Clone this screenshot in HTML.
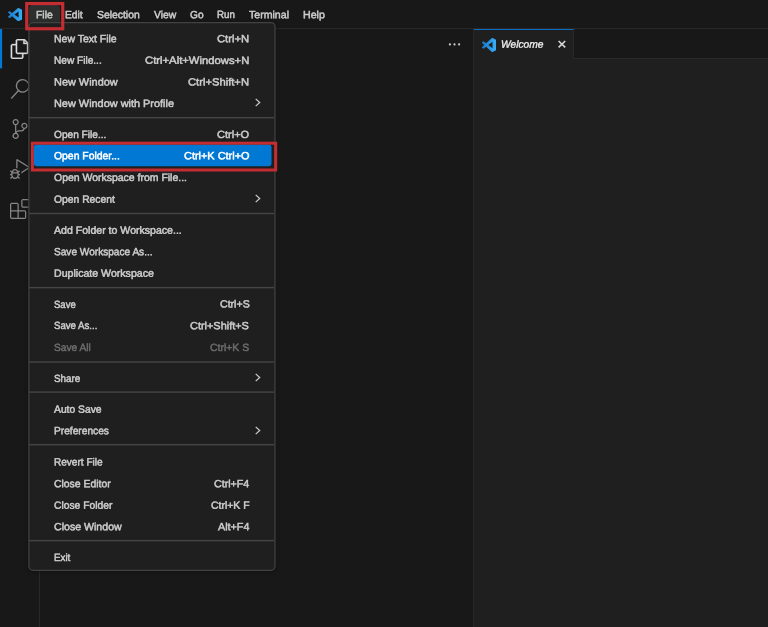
<!DOCTYPE html>
<html><head><meta charset="utf-8"><title>Welcome - Visual Studio Code</title>
<style>
html,body{margin:0;padding:0;}
body{width:768px;height:627px;overflow:hidden;background:#181818;font-family:"Liberation Sans",sans-serif;position:relative;color:#ccc;}
.abs{position:absolute;}
#titlebar{left:0;top:0;width:768px;height:28px;background:#181818;border-bottom:1px solid #282828;}
#activity{left:0;top:29px;width:39px;height:598px;background:#181818;border-right:1px solid #282828;}
#sidebar{left:40px;top:29px;width:433px;height:598px;background:#181818;border-right:1px solid #282828;}
#editor{left:474px;top:29px;width:294px;height:598px;background:#1f1f1f;}
#tabs{left:474px;top:29px;width:294px;height:29px;background:#181818;border-bottom:1px solid #292929;}
#tab{left:474px;top:29px;width:100px;height:30px;background:#1f1f1f;border-right:1px solid #292929;border-top:1px solid #0a6cc0;box-sizing:border-box;}
#filebtn{left:29px;top:5px;width:31px;height:19px;background:#2d2e2e;border-radius:4px;}
.t{position:absolute;-webkit-text-stroke:0.5px currentColor;font-size:10.5px;line-height:14px;color:#cccccc;white-space:nowrap;transform-origin:0 50%;}
.t.mb{color:#cccccc;}
.t.dis{color:#6b6b6b;}
.t.sel{color:#ffffff;}
.t.wel{color:#ececec;font-style:italic;-webkit-text-stroke:0.35px currentColor;}
#menushadow{left:29px;top:23px;width:246px;height:547px;border-radius:4px;box-shadow:0 1px 5px rgba(0,0,0,.45);}
.sep{position:absolute;left:29px;width:245px;height:1px;background:#454545;}
.chev{position:absolute;}
svg{display:block;}
#L{position:absolute;left:0;top:0;width:768px;height:627px;will-change:opacity;}
</style></head><body><div id="L">
<div id="titlebar" class="abs"></div>
<div id="activity" class="abs"></div>
<svg class="abs" style="left:0;top:29px" width="4" height="41" viewBox="0 0 4 41"><rect x="0" y="0" width="2.1" height="39.4" fill="#0078d4"/></svg>
<div id="sidebar" class="abs"></div>
<div id="editor" class="abs"></div>
<div id="tabs" class="abs"></div>
<div id="tab" class="abs"></div>

<!-- title bar logo -->
<svg class="abs" style="left:8px;top:7.7px" width="14.1" height="13.2" viewBox="0 0 24 24" preserveAspectRatio="none"><defs><linearGradient id="lg" x1="0" x2="1" y1="0" y2="0"><stop offset="0" stop-color="#1a78c8"/><stop offset="1" stop-color="#38aef8"/></linearGradient></defs><path fill="url(#lg)" d="M23.15 2.587L18.21.21a1.494 1.494 0 0 0-1.705.29l-9.46 8.63-4.12-3.128a.999.999 0 0 0-1.276.057L.327 7.261A1 1 0 0 0 .326 8.74L3.899 12 .326 15.26a1 1 0 0 0 .001 1.479L1.65 17.94a.999.999 0 0 0 1.276.057l4.12-3.128 9.46 8.63a1.492 1.492 0 0 0 1.704.29l4.942-2.377A1.5 1.5 0 0 0 24 20.06V3.939a1.5 1.5 0 0 0-.85-1.352zm-5.146 14.861L10.826 12l7.178-5.448v10.896z"/></svg>

<!-- activity icons -->
<svg class="abs" style="left:10.05px;top:39px" width="20" height="20" viewBox="0 0 24 24"><path fill="#dcdcdc" stroke="#dcdcdc" stroke-width="0.45" d="M17.5 0h-9L7 1.5V6H2.5L1 7.5v15.07L2.5 24h12.07L16 22.57V18h4.7l1.3-1.43V4.5L17.5 0zm0 2.12l2.38 2.38H17.5V2.12zm-3 20.38h-12v-15H7v9.07L8.500 18h6v4.5zm6-6h-12v-15H16V6h4.500v10.5z"/></svg>
<svg class="abs" style="left:10.2px;top:79px" width="20" height="20" viewBox="0 0 24 24"><path fill="#868686" d="M15.25 0a8.250 8.250 0 0 0-6.180 13.720L1 22.880l1.120 1.120 8.050-9.120A8.251 8.251 0 1 0 15.250.010V0zm0 15a6.750 6.750 0 1 1 0-13.500 6.750 6.750 0 0 1 0 13.500z"/></svg>
<svg class="abs" style="left:10.2px;top:119px" width="20" height="20" viewBox="0 0 24 24"><path fill="#868686" d="M21.007 8.222A3.738 3.738 0 0 0 15.045 5.200a3.737 3.737 0 0 0 1.156 6.583 2.988 2.988 0 0 1-2.668 1.670h-2.990a4.456 4.456 0 0 0-2.989 1.165V7.400a3.737 3.737 0 1 0-1.494 0v9.117a3.776 3.776 0 1 0 1.816.099 2.990 2.990 0 0 1 2.668-1.667h2.990a4.484 4.484 0 0 0 4.223-3.039 3.736 3.736 0 0 0 3.250-3.687zM4.565 3.738a2.242 2.242 0 1 1 4.484 0 2.242 2.242 0 0 1-4.484 0zm4.484 16.441a2.242 2.242 0 1 1-4.484 0 2.242 2.242 0 0 1 4.484 0zm8.221-9.715a2.242 2.242 0 1 1 0-4.485 2.242 2.242 0 0 1 0 4.485z"/></svg>
<svg class="abs" style="left:10.2px;top:159px" width="20" height="20" viewBox="0 0 24 24"><path fill="#868686" d="M10.940 13.500l-1.320 1.320a3.730 3.730 0 0 0-7.240 0L1.060 13.500 0 14.560l1.720 1.720-.220.220V18H0v1.500h1.500v.080c.077.489.214.966.410 1.420L0 22.940 1.060 24l1.650-1.650A4.308 4.308 0 0 0 6 24a4.310 4.310 0 0 0 3.290-1.650L10.940 24 12 22.940 10.090 21c.198-.464.336-.951.410-1.450v-.100H12V18h-1.500v-1.500l-.220-.220L12 14.560l-1.060-1.060zM6 13.500a2.250 2.250 0 0 1 2.250 2.250h-4.500A2.250 2.250 0 0 1 6 13.500zm3 6a3.330 3.330 0 0 1-3 3 3.330 3.330 0 0 1-3-3v-2.250h6v2.250zm14.760-9.900v1.260L13.500 17.370V15.600l8.500-5.370L9 2v9.460a5.070 5.070 0 0 0-1.500-.720V.630L8.640 0l15.120 9.600z"/></svg>
<svg class="abs" style="left:10.2px;top:199px" width="20" height="20" viewBox="0 0 24 24"><path fill="#868686" d="M13.500 1.500L15 0h7.500L24 1.500V9l-1.500 1.500H15L13.500 9V1.500zm1.500 0V9h7.500V1.500H15zM0 15V6l1.500-1.500H9L10.500 6v7.500H18l1.500 1.500v7.500L18 24H1.500L0 22.500V15zm9-1.500V6H1.500v7.500H9zM9 15H1.500v7.500H9V15zm1.500 7.500H18V15h-7.500v7.500z"/></svg>

<!-- sidebar "..." -->
<svg class="abs" style="left:446px;top:40px" width="18" height="9" viewBox="0 0 18 9"><circle cx="3.9" cy="4.45" r="1.1" fill="#cccccc"/><circle cx="8.5" cy="4.45" r="1.1" fill="#cccccc"/><circle cx="13.1" cy="4.45" r="1.1" fill="#cccccc"/></svg>

<!-- tab contents -->
<svg class="abs" style="left:481.8px;top:37.6px" width="14" height="14" viewBox="0 0 24 24"><path fill="url(#lg)" d="M23.15 2.587L18.21.21a1.494 1.494 0 0 0-1.705.29l-9.46 8.63-4.12-3.128a.999.999 0 0 0-1.276.057L.327 7.261A1 1 0 0 0 .326 8.74L3.899 12 .326 15.26a1 1 0 0 0 .001 1.479L1.65 17.94a.999.999 0 0 0 1.276.057l4.12-3.128 9.46 8.63a1.492 1.492 0 0 0 1.704.29l4.942-2.377A1.5 1.5 0 0 0 24 20.06V3.939a1.5 1.5 0 0 0-.85-1.352zm-5.146 14.861L10.826 12l7.178-5.448v10.896z"/></svg>
<svg class="abs" style="left:556px;top:38px" width="12" height="12" viewBox="0 0 12 12"><path d="M2.6 3 L9.2 9.3 M9.2 3 L2.6 9.3" stroke="#d6d6d6" stroke-width="1.6" fill="none"/></svg>

<!-- menubar -->
<div id="filebtn" class="abs"></div>
<div class="t mb" style="left:35.80px;top:7px;transform:translateY(0.20px) rotate(0.03deg) scaleX(0.9869);">File</div>
<div class="t mb" style="left:65.40px;top:7px;transform:translateY(0.20px) rotate(0.03deg) scaleX(0.9782);">Edit</div>
<div class="t mb" style="left:97.00px;top:7px;transform:translateY(0.20px) rotate(0.03deg) scaleX(0.9895);">Selection</div>
<div class="t mb" style="left:153.90px;top:7px;transform:translateY(0.20px) rotate(0.03deg) scaleX(0.9877);">View</div>
<div class="t mb" style="left:189.75px;top:7px;transform:translateY(0.20px) rotate(0.03deg) scaleX(0.9668);">Go</div>
<div class="t mb" style="left:217.10px;top:7px;transform:translateY(0.20px) rotate(0.03deg) scaleX(0.9291);">Run</div>
<div class="t mb" style="left:249.00px;top:7px;transform:translateY(0.20px) rotate(0.03deg) scaleX(1.0079);">Terminal</div>
<div class="t mb" style="left:302.50px;top:7px;transform:translateY(0.20px) rotate(0.03deg) scaleX(1.0134);">Help</div>

<!-- dropdown menu -->
<div id="menushadow" class="abs"></div>
<svg class="abs" style="left:0;top:0" width="768" height="627" viewBox="0 0 768 627"><rect x="28.9" y="22.5" width="246.1" height="547.85" rx="4" ry="4" fill="#1f1f1f" stroke="#424242" stroke-width="1.25"/><rect x="33.8" y="144.4" width="237.7" height="21.8" rx="3" ry="3" fill="#0078d4"/></svg>
<div class="t " style="left:54.30px;top:31px;transform:translateY(0.23px) rotate(0.03deg) scaleX(0.9980);">New Text File</div>
<div class="t " style="left:217.10px;top:31px;transform:translateY(0.23px) rotate(0.03deg) scaleX(1.0717);">Ctrl+N</div>
<div class="t " style="left:54.30px;top:52px;transform:translateY(0.85px) rotate(0.03deg) scaleX(0.9618);">New File...</div>
<div class="t " style="left:145.00px;top:52px;transform:translateY(0.85px) rotate(0.03deg) scaleX(1.0735);">Ctrl+Alt+Windows+N</div>
<div class="t " style="left:54.30px;top:74px;transform:translateY(0.42px) rotate(0.03deg) scaleX(1.0395);">New Window</div>
<div class="t " style="left:188.30px;top:74px;transform:translateY(0.42px) rotate(0.03deg) scaleX(1.0667);">Ctrl+Shift+N</div>
<div class="t " style="left:54.30px;top:96px;transform:translateY(0.05px) rotate(0.03deg) scaleX(1.0385);">New Window with Profile</div>
<svg class="chev" style="left:253.70px;top:97.35px" width="8" height="11" viewBox="0 0 8 11"><path d="M1.7 1.9 L5.7 5.5 L1.7 9.1" fill="none" stroke="#cccccc" stroke-width="1.25"/></svg>
<div class="sep" style="top:117px;opacity:1.00"></div>
<div class="sep" style="top:118px;opacity:0.40"></div>
<div class="t " style="left:54.30px;top:126px;transform:translateY(0.98px) rotate(0.03deg) scaleX(0.9653);">Open File...</div>
<div class="t " style="left:217.10px;top:126px;transform:translateY(0.98px) rotate(0.03deg) scaleX(1.0509);">Ctrl+O</div>
<div class="t sel" style="left:54.30px;top:148px;transform:translateY(0.30px) rotate(0.03deg) scaleX(0.9903);">Open Folder...</div>
<div class="t sel" style="left:183.75px;top:148px;transform:translateY(0.30px) rotate(0.03deg) scaleX(1.0402);">Ctrl+K Ctrl+O</div>
<div class="t " style="left:54.30px;top:170px;transform:translateY(0.00px) rotate(0.03deg) scaleX(0.9967);">Open Workspace from File...</div>
<div class="t " style="left:54.30px;top:191px;transform:translateY(0.70px) rotate(0.03deg) scaleX(0.9842);">Open Recent</div>
<svg class="chev" style="left:253.70px;top:193.00px" width="8" height="11" viewBox="0 0 8 11"><path d="M1.7 1.9 L5.7 5.5 L1.7 9.1" fill="none" stroke="#cccccc" stroke-width="1.25"/></svg>
<div class="sep" style="top:212px;opacity:0.20"></div>
<div class="sep" style="top:213px;opacity:1.00"></div>
<div class="sep" style="top:214px;opacity:0.20"></div>
<div class="t " style="left:54.30px;top:222px;transform:translateY(0.73px) rotate(0.03deg) scaleX(1.0061);">Add Folder to Workspace...</div>
<div class="t " style="left:54.30px;top:244px;transform:translateY(0.25px) rotate(0.03deg) scaleX(0.9617);">Save Workspace As...</div>
<div class="t " style="left:54.30px;top:265px;transform:translateY(0.78px) rotate(0.03deg) scaleX(1.0088);">Duplicate Workspace</div>
<div class="sep" style="top:286px;opacity:0.10"></div>
<div class="sep" style="top:287px;opacity:1.00"></div>
<div class="sep" style="top:288px;opacity:0.30"></div>
<div class="t " style="left:54.30px;top:296px;transform:translateY(0.60px) rotate(0.03deg) scaleX(0.9065);">Save</div>
<div class="t " style="left:219.60px;top:296px;transform:translateY(0.60px) rotate(0.03deg) scaleX(1.0078);">Ctrl+S</div>
<div class="t " style="left:54.30px;top:318px;transform:translateY(0.33px) rotate(0.03deg) scaleX(0.9179);">Save As...</div>
<div class="t " style="left:190.40px;top:318px;transform:translateY(0.33px) rotate(0.03deg) scaleX(1.0405);">Ctrl+Shift+S</div>
<div class="t dis" style="left:54.30px;top:339px;transform:translateY(0.93px) rotate(0.03deg) scaleX(0.9670);">Save All</div>
<div class="t dis" style="left:210.20px;top:339px;transform:translateY(0.93px) rotate(0.03deg) scaleX(0.9926);">Ctrl+K S</div>
<div class="sep" style="top:361px;opacity:0.70"></div>
<div class="sep" style="top:362px;opacity:0.70"></div>
<div class="t " style="left:54.30px;top:370px;transform:translateY(0.88px) rotate(0.03deg) scaleX(0.9382);">Share</div>
<svg class="chev" style="left:253.70px;top:372.18px" width="8" height="11" viewBox="0 0 8 11"><path d="M1.7 1.9 L5.7 5.5 L1.7 9.1" fill="none" stroke="#cccccc" stroke-width="1.25"/></svg>
<div class="sep" style="top:391px;opacity:0.60"></div>
<div class="sep" style="top:392px;opacity:0.80"></div>
<div class="t " style="left:54.30px;top:401px;transform:translateY(0.80px) rotate(0.03deg) scaleX(0.9824);">Auto Save</div>
<div class="t " style="left:54.30px;top:423px;transform:translateY(0.23px) rotate(0.03deg) scaleX(0.9695);">Preferences</div>
<svg class="chev" style="left:253.70px;top:424.53px" width="8" height="11" viewBox="0 0 8 11"><path d="M1.7 1.9 L5.7 5.5 L1.7 9.1" fill="none" stroke="#cccccc" stroke-width="1.25"/></svg>
<div class="sep" style="top:444px;opacity:1.00"></div>
<div class="sep" style="top:445px;opacity:0.40"></div>
<div class="t " style="left:54.30px;top:454px;transform:translateY(0.45px) rotate(0.03deg) scaleX(0.9573);">Revert File</div>
<div class="t " style="left:54.30px;top:476px;transform:translateY(0.18px) rotate(0.03deg) scaleX(0.9912);">Close Editor</div>
<div class="t " style="left:214.00px;top:476px;transform:translateY(0.18px) rotate(0.03deg) scaleX(1.0167);">Ctrl+F4</div>
<div class="t " style="left:54.30px;top:497px;transform:translateY(0.70px) rotate(0.03deg) scaleX(0.9810);">Close Folder</div>
<div class="t " style="left:210.80px;top:497px;transform:translateY(0.70px) rotate(0.03deg) scaleX(0.9923);">Ctrl+K F</div>
<div class="t " style="left:54.30px;top:519px;transform:translateY(0.28px) rotate(0.03deg) scaleX(1.0088);">Close Window</div>
<div class="t " style="left:217.90px;top:519px;transform:translateY(0.28px) rotate(0.03deg) scaleX(1.0248);">Alt+F4</div>
<div class="sep" style="top:539px;opacity:0.10"></div>
<div class="sep" style="top:540px;opacity:1.00"></div>
<div class="sep" style="top:541px;opacity:0.30"></div>
<div class="t " style="left:54.30px;top:550px;transform:translateY(0.10px) rotate(0.03deg) scaleX(0.9306);">Exit</div>

<div class="t wel" style="left:501.3px;top:36px;transform:translateY(0.85px) rotate(0.03deg) scaleX(0.9753)">Welcome</div>
<!-- annotations -->
<svg class="abs" style="left:0;top:0" width="768" height="627" viewBox="0 0 768 627"><rect x="26.75" y="3.55" width="36" height="25.2" fill="none" stroke="#c42d32" stroke-width="3.2"/><rect x="32.4" y="143.2" width="243.3" height="26.8" fill="none" stroke="#c42d32" stroke-width="3"/></svg>
</div></body></html>
